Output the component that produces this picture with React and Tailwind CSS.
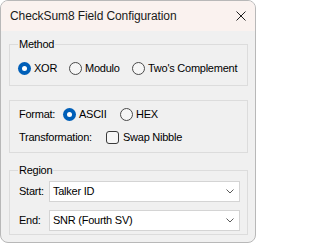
import React, { useState } from 'react'

// Small Win11-style radio button
const Radio = ({ checked, label, onClick, className = '' }) => (
  <div className={`flex items-center gap-[3px] h-[13px] ${className}`} onClick={onClick}>
    {checked ? (
      <span className="w-[13px] h-[13px] rounded-full bg-[#005fb8] flex items-center justify-center shrink-0">
        <span className="w-[5px] h-[5px] rounded-full bg-white" />
      </span>
    ) : (
      <span className="w-[13px] h-[13px] rounded-full border border-[#4a4a4a] bg-[#f6f6f6] shrink-0" />
    )}
    <span>{label}</span>
  </div>
)

const Combo = ({ value }) => (
  <div className="flex-1 h-[21px] bg-white border border-[#d4d4d4] flex items-center justify-between pl-[3px] pr-[5px]">
    <span>{value}</span>
    <svg width="8" height="5" viewBox="0 0 8 5">
      <polyline points="0.5,0.5 4,4 7.5,0.5" fill="none" stroke="#5a5a5a" strokeWidth="1" />
    </svg>
  </div>
)

const App = () => {
  const [method, setMethod] = useState('xor')
  const [format, setFormat] = useState('ascii')
  const [swap, setSwap] = useState(false)

  return (
    <div className="w-[256px] h-[243px] bg-[#f0f0f0] border border-[#b8b8b8] rounded-[8px] overflow-hidden flex flex-col text-black font-['Liberation_Sans',Arial,sans-serif] text-[11px] leading-[13px] tracking-[-0.25px]">
      {/* title bar */}
      <div className="h-[30px] bg-[#faf2ef] flex items-center justify-between pl-[9px] pr-[9px] shrink-0">
        <span className="text-[12px] leading-[16px] tracking-[-0.1px] text-[#1a1a1a]">CheckSum8 Field Configuration</span>
        <svg width="10" height="10" viewBox="0 0 10 10">
          <line x1="0.5" y1="0.5" x2="9.5" y2="9.5" stroke="#1f1f1f" strokeWidth="1" />
          <line x1="9.5" y1="0.5" x2="0.5" y2="9.5" stroke="#1f1f1f" strokeWidth="1" />
        </svg>
      </div>

      <div className="flex-1 pl-[8px] pr-[7px]">
        {/* Method */}
        <fieldset className="mt-[6px] border border-[#dcdcdc] px-[8px] pt-[11px] pb-[10px]">
          <legend className="px-[1px] leading-[14px]">Method</legend>
          <div className="flex">
            <Radio className="w-[51px]" label="XOR" checked={method === 'xor'} onClick={() => setMethod('xor')} />
            <Radio className="w-[63px]" label="Modulo" checked={method === 'mod'} onClick={() => setMethod('mod')} />
            <Radio label="Two's Complement" checked={method === 'twos'} onClick={() => setMethod('twos')} />
          </div>
        </fieldset>

        {/* Format / Transformation */}
        <fieldset className="mt-[14px] border border-[#dcdcdc] px-[8px] pt-[7px] pb-[8px] flex flex-col gap-[10px]">
          <div className="flex items-center h-[13px]">
            <span className="w-[45px] pl-[1px]">Format:</span>
            <Radio className="w-[57px]" label="ASCII" checked={format === 'ascii'} onClick={() => setFormat('ascii')} />
            <Radio label="HEX" checked={format === 'hex'} onClick={() => setFormat('hex')} />
          </div>
          <div className="flex items-center h-[13px]">
            <span className="w-[88px] pl-[1px]">Transformation:</span>
            <div className="flex items-center gap-[4px]" onClick={() => setSwap(!swap)}>
              <span className="w-[13px] h-[13px] rounded-[3px] border border-[#3a3a3a] bg-[#f6f6f6] shrink-0" />
              <span>Swap Nibble</span>
            </div>
          </div>
        </fieldset>

        {/* Region */}
        <fieldset className="mt-[10px] border border-[#dcdcdc] pl-[8px] pr-[7px] pt-[4px] pb-[3px] flex flex-col gap-[8px]">
          <legend className="px-[1px] leading-[14px]">Region</legend>
          <div className="flex items-center">
            <span className="w-[31px] pl-[1px]">Start:</span>
            <Combo value="Talker ID" />
          </div>
          <div className="flex items-center">
            <span className="w-[31px] pl-[1px]">End:</span>
            <Combo value="SNR (Fourth SV)" />
          </div>
        </fieldset>
      </div>
    </div>
  )
}

export default App
